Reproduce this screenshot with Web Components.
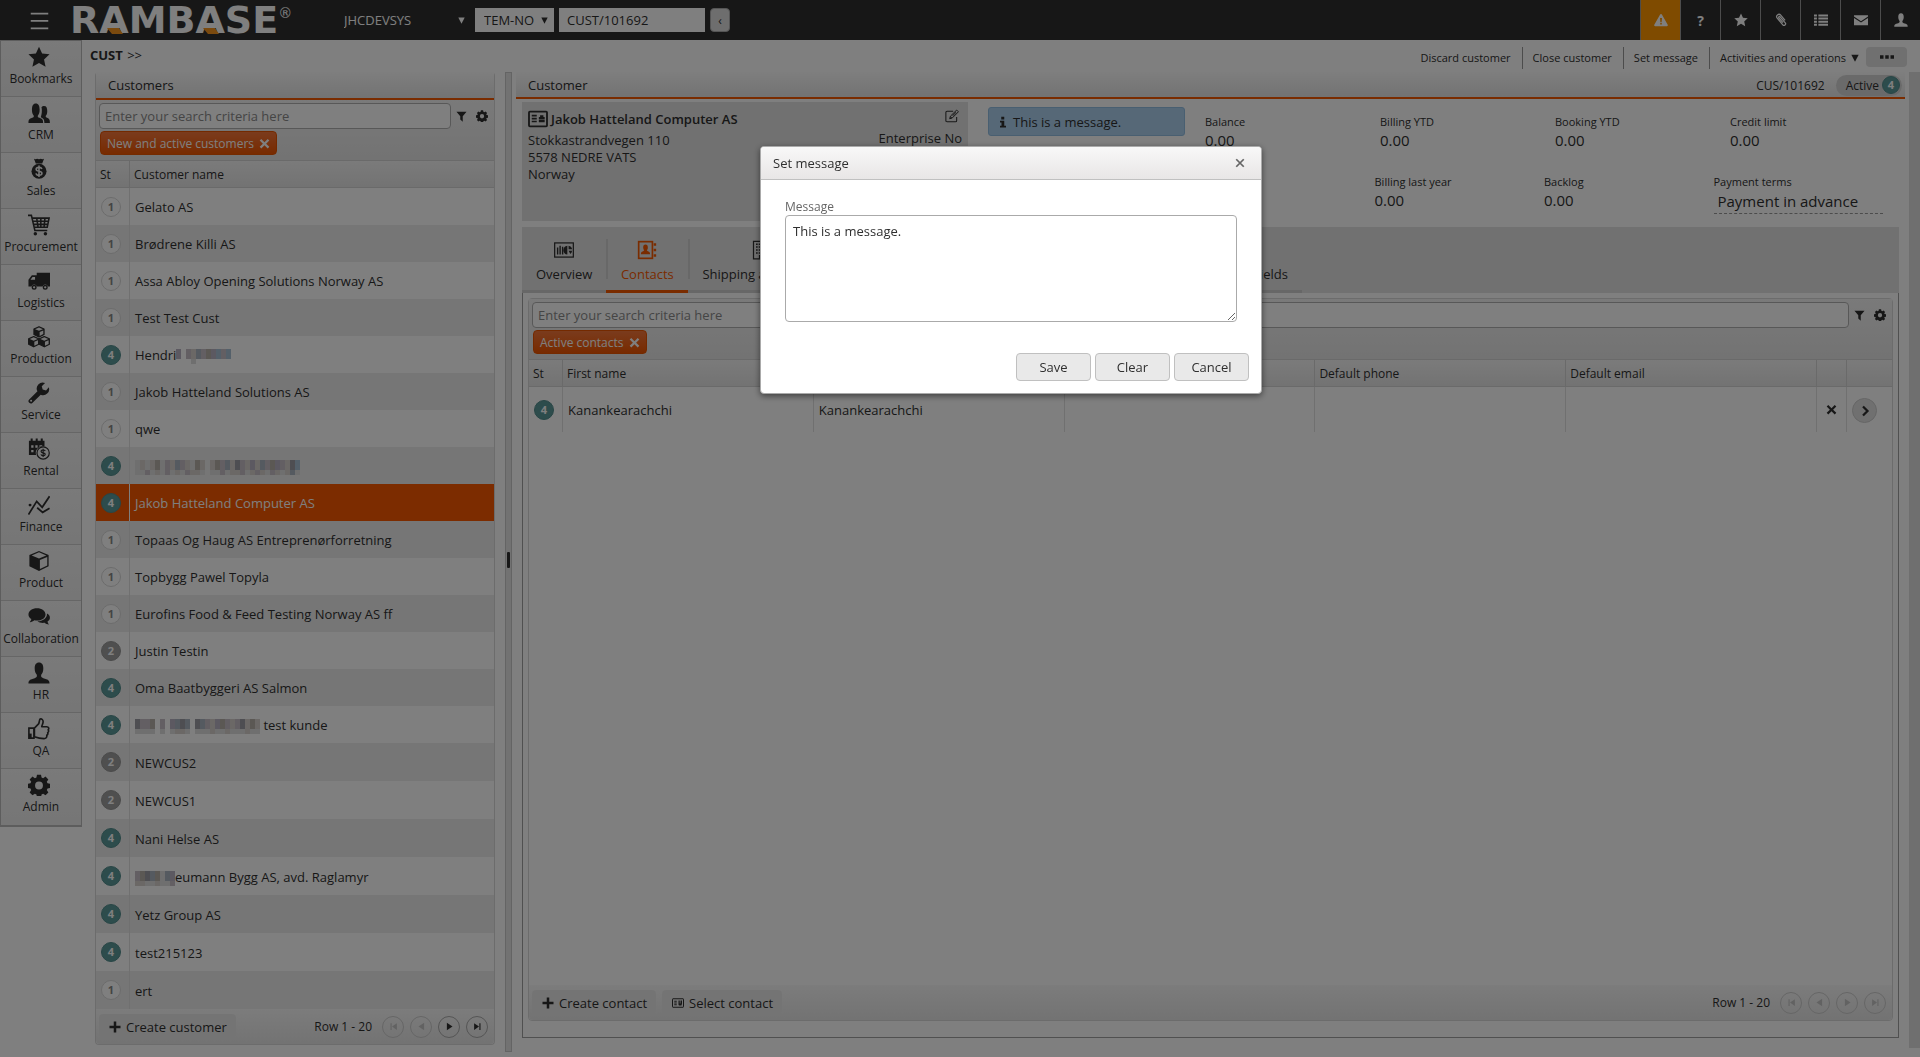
<!DOCTYPE html>
<html lang="en">
<head>
<meta charset="utf-8">
<title>RamBase - Customer</title>
<style>
html, body { margin: 0; padding: 0; }
body { background: #fff; color: #2f2f2f; font: 13px/17px "Open Sans", "Noto Sans", sans-serif; }
</style>
</head>
<body>
<rb-app></rb-app>
<script>
const BASE = `
*, *::before, *::after { box-sizing: border-box; }
:host { display: block; box-sizing: border-box; }
:host([hidden]) { display: none; }
button, input, textarea, select { font: inherit; color: inherit; margin: 0; border-radius: 0; }
button { border: 0; background: none; padding: 0; cursor: pointer; }
a { color: inherit; text-decoration: none; }
`;
function define(name, css, html) {
  customElements.define(name, class extends HTMLElement {
    constructor() {
      super();
      this.attachShadow({ mode: "open" });
    }
    connectedCallback() {
      if (this.shadowRoot.childNodes.length) return;
      const body = typeof html === "function" ? html(this) : html;
      this.shadowRoot.innerHTML = "<style>" + BASE + css + "</style>" + body;
    }
  });
}

/* ---------- icons ---------- */
const ICONS = {
  menu: '<path d="M2 4h20M2 12.500h20M2 21h20" fill="none" stroke="currentColor" stroke-width="2"/>',
  star: '<path d="M12 .8l3.400 7.400 8.100.9-6 5.500 1.700 8L12 18.500 4.800 22.600l1.700-8-6-5.500 8.100-.9z"/>',
  crm: '<path d="M.5 23c0-4 .8-4.500 4-5.700 1.700-.6 2-1.200 1.800-2.300C5 13.600 4.300 11.500 4.300 8.500c0-4.600 1.200-7 4.200-7s4.200 2.400 4.200 7c0 3-.7 5.100-2 6.500-.2 1.100.1 1.700 1.800 2.300 3.200 1.200 4 1.700 4 5.700z"/><path d="M14.700 5.800c.7-1 1.700-1.500 2.800-1.500 2.600 0 3.500 2 3.500 5.500 0 2.500-.5 4.200-1.600 5.300-.2 1 0 1.600 1.200 2.100 2.600 1 3.300 1.800 3.300 5.800h-6c0-4-1-5.300-4-6.500.7-1.800 1.200-4 1.200-7 0-1.400-.1-2.700-.4-3.700z"/>',
  sales: '<path d="M6.500.8c1 .6 2.500.6 3.500 0 1 .6 3 .6 4 0 1 .6 2.500.6 3.500 0L15.500 6h-7z"/><circle cx="12" cy="14.500" r="8.200"/><g fill="none" stroke="#f0f0f0" stroke-width="1.700"><path d="M15.200 12c-.5-1.300-1.600-1.800-3.200-1.800-1.900 0-3.100.7-3.100 2.100 0 3 6.300 1.300 6.300 4.300 0 1.500-1.300 2.200-3.200 2.200-1.800 0-3-.7-3.300-2.100M12 8.200v12.600"/></g>',
  cart: '<path d="M0 1.500h3.700L7.500 18H21M4.500 4.500H23L21 14.500H6.500M5.500 8h16.500M6 11.300h15.500M9.500 4.500l1.500 10M14 4.500v10M18.500 4.500l-1 10" fill="none" stroke="currentColor" stroke-width="1.700"/><circle cx="8" cy="21.500" r="1.900"/><circle cx="19" cy="21.500" r="1.900"/>',
  truck: '<path fill-rule="evenodd" d="M9.500 3H24v15h-2.300a3 3 0 0 0-5.800 0H9.600a3 3 0 0 0-5.800 0H.5v-7.500l3.700-4.700h5.300zM5 7.500l-2.300 3.200h5V7.500z"/><circle cx="6.700" cy="18.900" r="2" fill="none" stroke="currentColor" stroke-width="1.500"/><circle cx="18.800" cy="18.900" r="2" fill="none" stroke="currentColor" stroke-width="1.500"/>',
  boxes: '<g stroke="currentColor" stroke-width="1.300" stroke-linejoin="round"><path d="M12 .8l5.500 2.400v6L12 12 6.500 9.200v-6z"/><path d="M6.200 11.500l5.500 2.400v6l-5.500 2.800-5.500-2.800v-6z"/><path d="M17.800 11.500l5.500 2.400v6l-5.500 2.800-5.500-2.800v-6z"/></g><g fill="#f0f0f0"><path d="M12 1.600l4.300 1.900L12 5.300 7.700 3.500zM12.700 6.500l4-1.700v4l-4 2zM6.200 12.300l4.300 1.900-4.300 1.800-4.300-1.800zM6.900 17.200l4-1.700v4l-4 2zM17.800 12.300l4.300 1.900-4.300 1.800-4.300-1.800zM18.500 17.200l4-1.700v4l-4 2z"/></g>',
  wrench: '<path fill-rule="evenodd" d="M22.700 5.700a6.600 6.600 0 0 1-8.800 8.200L5 22.600a2.500 2.500 0 0 1-3.700-3.500l9-8.900A6.600 6.600 0 0 1 18.600 1L15 4.500l1 3.700 3.700 1zM3.400 19.400a1.100 1.100 0 1 0 0 2.200 1.100 1.100 0 0 0 0-2.200z"/>',
  rental: '<path fill-rule="evenodd" d="M1 3h17v6.200A7.500 7.500 0 0 0 8.800 18.500H1zM3.500 8v2.500H6V8zm4.500 0v2.500h2.500V8zm4.500 0v2h3V8zM3.500 13v2.500H6V13z"/><path d="M4 .5v3M9.500.5v3M15 .5v3" stroke="currentColor" stroke-width="2.200"/><circle cx="16.500" cy="16.300" r="6.700" fill="none" stroke="currentColor" stroke-width="1.300"/><path d="M18.800 14.300c-.4-.9-1.200-1.200-2.300-1.200-1.300 0-2.200.5-2.200 1.500 0 2.200 4.500 1 4.500 3.200 0 1-.9 1.600-2.300 1.600-1.300 0-2.100-.5-2.400-1.500M16.500 11.800v9" fill="none" stroke="currentColor" stroke-width="1.300"/>',
  finance: '<path d="M.5 22.500L9.500 8l6 6.500L23.500 2.500M1 12h2.500M10 15l6 5 7.500-4.500" fill="none" stroke="currentColor" stroke-width="1.900"/><circle cx="2.200" cy="12" r="1.500"/>',
  cube: '<path d="M12 1l10.500 4.500v12.300L12 23 1.500 17.800V5.500z"/><path d="M12 2.500L20 6l-8 3.300L4 6zM13 11l8-3.500v9.300L13 20.800z" fill="#f0f0f0"/>',
  chat: '<path d="M9.800 2.500c5.300 0 9.300 2.900 9.300 6.700s-4 6.700-9.300 6.700c-1 0-2-.1-2.900-.3-1.300 1-3 1.900-5 2 1-1 1.600-2 1.800-3.300C1.600 13 .5 11.300.5 9.200c0-3.800 4-6.700 9.300-6.700z"/><path d="M20.700 8.200c2 1 3.200 2.600 3.200 4.500 0 1.700-1 3.200-2.600 4.200.2 1.300.7 2.400 1.700 3.300-2 0-3.700-.8-4.800-1.800-3.100.5-6-.2-7.900-1.700 5.600 0 10.800-3.300 10.400-8.500z"/>',
  person: '<path d="M12 .5c3.300 0 4.700 2.400 4.700 6.500 0 3-.9 5.300-2.300 6.900-.4 2 .2 3 2.300 3.700 5.200 1.500 6.800 2 6.800 5.900H.5c0-3.900 1.600-4.400 6.800-5.900 2.100-.7 2.700-1.700 2.300-3.700C8.200 12.300 7.300 10 7.300 7 7.300 2.900 8.700.5 12 .5z"/>',
  thumb: '<path d="M7 11l4.500-4.500c1-1.500.7-4 1.700-5.300 1.800-.7 3.300.8 3.300 3S15 8 15 9.500h5.500c2 0 2.800 2 1.500 3.300.8 1.200.5 2.600-.5 3.200.4 1.200 0 2.300-1 2.900.3 2.300-1 3.600-3 3.600-4.500 0-6.500-.5-10.500-2z" fill="none" stroke="currentColor" stroke-width="1.800" stroke-linejoin="round"/><path d="M1 11h5.500v11H1z" fill="none" stroke="currentColor" stroke-width="1.800"/><path d="M1 17h3v5H1z"/>',
  gear: '<path fill-rule="evenodd" d="M9.800.7h4.400l.6 3 1.700.8 2.600-1.700 3.100 3.100-1.700 2.600.8 1.700 3 .6v4.400l-3 .6-.8 1.700 1.700 2.600-3.100 3.100-2.600-1.700-1.700.8-.6 3H9.800l-.6-3-1.700-.8-2.600 1.700-3.100-3.100 1.700-2.600-.8-1.700-3-.6v-4.400l3-.6.8-1.700-1.700-2.600 3.100-3.100 2.600 1.700 1.700-.8zM12 8.200a4.300 4.300 0 1 0 0 8.600 4.300 4.300 0 0 0 0-8.600z"/>',
  filter: '<path d="M1 1.500h22l-8.300 9.800v12l-5.400-4.500v-7.500z"/>',
  cross: '<path d="M5 2l7 7 7-7 3.500 3.500-7 6.800 7 7L19 22.800l-7-7-7 7-3.500-3.500 7-7-7-6.800z"/>',
  close: '<path d="M3 3l18 18M21 3L3 21" fill="none" stroke="currentColor" stroke-width="4.200"/>',
  plus: '<path d="M9.500 1h5v8.500H23v5h-8.500V23h-5v-8.500H1v-5h8.500z"/>',
  warn: '<path fill-rule="evenodd" d="M12 1.500c.7 0 1.100.3 1.500 1l10 17.700c.7 1.300 0 2.300-1.300 2.300H1.800C.5 22.500-.2 21.500.5 20.200l10-17.700c.4-.7.8-1 1.500-1zM10.300 8.500l.6 7h2.200l.6-7zm.4 8.300v2.700h2.600v-2.700z"/>',
  clip: '<path d="M19 12.500l-7.500-8.700a3.900 3.900 0 0 0-6 5l9.600 11.400a2.700 2.700 0 0 0 4.200-3.400L10.500 6.500a1.400 1.400 0 0 0-2.200 1.800l7 8.300" fill="none" stroke="currentColor" stroke-width="2.100"/>',
  list: '<path d="M7.500 2.500H24V6H7.500zm0 5.300H24v3.400H7.500zm0 5.300H24v3.400H7.500zm0 5.300H24v3.400H7.500zM0 2.500h5V6H0zm0 5.300h5v3.400H0zm0 5.300h5v3.400H0zm0 5.300h5v3.400H0z"/>',
  mail: '<path d="M0 4h24v2L12 14 0 6zM0 8.500l12 7.800 12-7.800V21H0z"/>',
  info: '<path d="M8.500 1.500h6V7h-6zM6 9.500h8.500v10H18V23H6v-3.500h3v-6.500H6z"/>',
  edit: '<path d="M20 13.500V20a2 2 0 0 1-2 2H3.500a2 2 0 0 1-2-2V6a2 2 0 0 1 2-2H14" fill="none" stroke="currentColor" stroke-width="1.800"/><path d="M20 1.800l3 3-10.500 10.500-4.500 1.400 1.400-4.500z" fill="none" stroke="currentColor" stroke-width="1.700"/><path d="M9 16.300l1-3.500 2.300 2.500zM12.500 11l6-6 1 1-6 6z"/>',
  card: '<rect x="1.200" y="3.200" width="21.600" height="17.600" rx="1" fill="none" stroke="currentColor" stroke-width="2.200"/><path d="M4.500 7h6v2h-6zm0 3.500h6v2h-6zm0 3.500h6v2h-6zM14.500 7.500h4v2H20v2.500h-7V9.500h1.500zM13 12.700h7V16h-7z"/>',
  pick: '<rect x="1" y="3.500" width="22" height="17" rx="1" fill="none" stroke="currentColor" stroke-width="2"/><path d="M4.500 7.500h5v2h-5zm0 3.500h5v2h-5zm0 3.500h5v2h-5zM13 7h2.500v6H17V7h3v6l-1 4h-5l-1-1.500z"/>',
  overview: '<rect x=".8" y="3.500" width="22.400" height="17" fill="none" stroke="currentColor" stroke-width="1.500"/><path d="M3.500 9h1.700v8.500H3.500zm3-2h1.700v10.500H6.500zm3 1h1.700v9.500H9.500zM16 7v10.500a5.300 5.300 0 0 1 0-10.500zM17.500 6.800a5 5 0 0 1 4.200 4.200h-4.200zM17.500 13h4.200a5 5 0 0 1-2 3.800z"/>',
  contacts: '<rect x="2" y="2" width="16.500" height="20" fill="none" stroke="currentColor" stroke-width="2"/><path d="M20 4h3v3h-3zm0 6.500h3v3h-3zM20 17h3v3h-3zM10.200 5.500c2 0 2.800 1.300 2.800 3.400 0 1.500-.5 2.700-1.200 3.500 0 1.300 3.900.9 3.900 4.600H4.700c0-3.700 3.900-3.300 3.900-4.600-.7-.8-1.200-2-1.200-3.500 0-2.100.8-3.400 2.800-3.400z"/>',
  building: '<path d="M3 1.500h18v21H3z" fill="none" stroke="currentColor" stroke-width="1.500"/><path d="M6 5h12M6 8.500h12M6 12h12M6 15.500h12" stroke="currentColor" stroke-width="1.800" stroke-dasharray="2 1.300"/><path d="M9.500 18h5v4.500h-5z"/>',
  chevron: '<path d="M8 3l9 9-9 9" fill="none" stroke="currentColor" stroke-width="4.500"/>',
  dots: '<path d="M0 9h6v6H0zm9 0h6v6H9zm9 0h6v6h-6z"/>',
  down: '<path d="M1 2h22L12 23z"/>',
  first: '<path d="M4 3h3v18H4zM21 3v18L8 12z"/>',
  prev: '<path d="M19 2v20L4 12z"/>',
  next: '<path d="M5 2v20l15-10z"/>',
  last: '<path d="M17 3h3v18h-3zM3 3v18l13-9z"/>'
};
define("rb-icon", `
:host { display: inline-block; flex: none; width: var(--size, 16px); height: var(--size, 16px); }
svg { display: block; width: 100%; height: 100%; fill: currentColor; }
`, el => `<svg viewBox="0 0 24 24" aria-hidden="true">${ICONS[el.getAttribute("name")]}</svg>`);

/* ---------- status circle ---------- */
define("rb-status", `
:host { display: inline-grid; place-items: center; flex: none; width: 20px; height: 20px; border-radius: 50%;
  font-size: 11px; line-height: 14px; font-weight: 700; color: #fff; background: #5a9898; border: 1px solid #528c8c; }
:host([value="1"]) { color: #888; background: #fff; border-color: #d8d8d8; }
:host([value="2"]) { background: #9e9e9e; border-color: #969696; }
`, el => `<span>${el.getAttribute("value")}</span>`);

/* ---------- pixelated name placeholder: one letter per block ---------- */
const TONES = { a: "#b8b2c2", b: "#c6bec6", c: "#d6d0cc", d: "#aab4c0", e: "#b6b0a8", f: "#dedede", g: "#9c9ca4", h: "#a8c0d4" };
define("rb-mosaic", `
:host { display: inline-block; height: 15px; vertical-align: -4px; }
svg { display: block; height: 15px; }
`, el => {
  const rows = [el.getAttribute("top"), el.getAttribute("bottom") || ""];
  const cell = (c, i, y, h) => TONES[c] ? `<rect x="${i * 5}" y="${y}" width="5" height="${h}" fill="${TONES[c]}"/>` : "";
  return `<svg width="${rows[0].length * 5}" height="15" shape-rendering="crispEdges" aria-hidden="true">` +
    [...rows[0]].map((c, i) => cell(c, i, 0, 10)).join("") +
    [...rows[1]].map((c, i) => cell(c, i, 10, 5)).join("") + "</svg>";
});

/* ---------- top bar ---------- */
define("rb-logo", `
:host { position: relative; height: 40px; color: #fff; white-space: nowrap; }
.word { font: 700 38px/40px "DejaVu Sans", sans-serif; }
sup { font: 14px/14px "DejaVu Sans", sans-serif; vertical-align: top; position: relative; top: 6px; }
svg { position: absolute; left: 0; top: 0; width: 220px; height: 40px; fill: #f7941d; }
`, `<span class="word">RAMBASE</span><sup>®</sup>
<svg viewBox="0 0 220 40" aria-hidden="true"><path d="M37 28h12l4 6H42zM133 28h12l4 6h-11z"/></svg>`);

define("rb-topbar", `
:host { display: flex; align-items: center; height: 40px; background: #2f2f2f; color: #fff; }
.menu { margin-left: 29px; width: 21px; height: 21px; --size: 21px; }
rb-logo { margin-left: 20px; width: 266px; }
.select { position: relative; display: flex; align-items: center; }
.select rb-icon { position: absolute; right: 6px; --size: 7px; pointer-events: none; }
select { appearance: none; border: 0; background: transparent; height: 24px; width: 100%; padding: 0 8px; outline: 0; }
.system { width: 135px; margin-right: 4px; }
.company { width: 79px; background: #fff; color: #2f2f2f; }
.company select { padding: 0 0 0 9px; }
.path { width: 146px; height: 24px; border: 0; background: #fff; color: #2f2f2f; padding: 0 8px; margin: 0 5px; }
.back { width: 20px; height: 24px; border-radius: 4px; background: #ddd; color: #2f2f2f; border: 1px solid #aaa; font-size: 12px; }
nav { margin-left: auto; display: flex; height: 40px; }
nav button { width: 40px; border-left: 1px solid #999; display: grid; place-items: center; --size: 14px; }
nav button.alert { background: #ff9600; }
nav span { font-weight: 700; font-size: 14px; }
`, `
<button class="menu" aria-label="Menu"><rb-icon name="menu"></rb-icon></button>
<rb-logo></rb-logo>
<div class="select system"><select aria-label="System"><option>JHCDEVSYS</option></select><rb-icon name="down"></rb-icon></div>
<div class="select company"><select aria-label="Company"><option>TEM-NO</option></select><rb-icon name="down"></rb-icon></div>
<input class="path" aria-label="Program" value="CUST/101692">
<button class="back" aria-label="Back">‹</button>
<nav>
<button class="alert" aria-label="Alerts"><rb-icon name="warn"></rb-icon></button>
<button aria-label="Help"><span>?</span></button>
<button aria-label="Favourites"><rb-icon name="star"></rb-icon></button>
<button aria-label="Attachments"><rb-icon name="clip"></rb-icon></button>
<button aria-label="Tasks"><rb-icon name="list"></rb-icon></button>
<button aria-label="Messages"><rb-icon name="mail"></rb-icon></button>
<button aria-label="User"><rb-icon name="person"></rb-icon></button>
</nav>`);

/* ---------- module menu ---------- */
const MODULES = [["star","Bookmarks"],["crm","CRM"],["sales","Sales"],["cart","Procurement"],["truck","Logistics"],["boxes","Production"],["wrench","Service"],["rental","Rental"],["finance","Finance"],["cube","Product"],["chat","Collaboration"],["person","HR"],["thumb","QA"],["gear","Admin"]];
define("rb-sidebar", `
:host { width: 82px; border: 1px solid #bbb; border-bottom-width: 2px; background: #f0f0f0; align-self: flex-start; }
a { display: flex; flex-direction: column; align-items: center; height: 56px; padding-top: 5px; gap: 3px; font-size: 12px; line-height: 16px; font-weight: 500; background: linear-gradient(#f4f4f4, #ececec); border-bottom: 1px solid #ccc; --size: 22px; }
a:last-child { border-bottom: 0; }
rb-icon { margin-right: 4px; }
`, MODULES.map(m => `<a href="#"><rb-icon name="${m[0]}"></rb-icon><span>${m[1]}</span></a>`).join(""));

/* ---------- action bar ---------- */
define("rb-actions", `
:host { display: flex; align-items: center; height: 32px; padding: 0 13px 0 8px; }
.crumb { font-size: 13px; margin-right: auto; padding-bottom: 1px; }
.crumb b { font-weight: 700; margin-right: 1px; }
a { font-size: 11px; line-height: 22px; padding: 0 11px 0 10px; border-right: 1px solid #999; margin-top: 4px; }
a.last { border: 0; padding-right: 7px; display: flex; align-items: center; gap: 5px; --size: 8px; }
button { width: 41px; height: 20px; background: #e0e0e0; border-radius: 4px; display: grid; place-items: center; --size: 14px; margin-top: 2px; }
`, `<div class="crumb"><b>CUST</b> &gt;&gt;</div>
<a href="#">Discard customer</a><a href="#">Close customer</a><a href="#">Set message</a>
<a href="#" class="last">Activities and operations <rb-icon name="down"></rb-icon></a>
<button aria-label="More"><rb-icon name="dots"></rb-icon></button>`);

/* ---------- panel title ---------- */
define("rb-title", `
:host { display: flex; align-items: center; height: 28px; padding: 1px 3px 0 12px; font-weight: 500; background: linear-gradient(#fdfdfd, #e6e6e6); border-bottom: 2px solid #f45800; }
.end { margin-left: auto; display: flex; align-items: center; gap: 11px; font-size: 12px; }
`, `<slot></slot><div class="end"><slot name="end"></slot></div>`);

/* ---------- search row with filter chip ---------- */
define("rb-search", `
:host { padding: 3px 6px 5px 3px; background: linear-gradient(#f4f4f4, #e6e6e6); }
.row { display: flex; align-items: center; }
input { flex: 1; min-width: 0; height: 26px; border: 1px solid #b0b0b0; border-radius: 4px; background: #fff; padding: 0 5px; outline: 0; }
input::placeholder { color: #8a8a8a; opacity: 1; }
.row button { --size: 11px; width: 11px; height: 22px; margin-left: 5px; display: grid; place-items: center; }
.row button + button { --size: 12px; width: 12px; margin-left: 9px; }
.chip { margin: 2px 0 0 1px; height: 24px; padding: 0 6px; border: 1px solid #e85400; border-radius: 4px; background: linear-gradient(#f5773a, #f05500); color: #fff; font-size: 12px; font-weight: 500; display: inline-flex; align-items: center; gap: 5px; --size: 11px; }
`, el => `<div class="row"><input aria-label="Search" placeholder="Enter your search criteria here">
<button aria-label="Filter"><rb-icon name="filter"></rb-icon></button><button aria-label="Settings"><rb-icon name="gear"></rb-icon></button></div>
<button class="chip"><span>${el.getAttribute("chip")}</span><rb-icon name="cross"></rb-icon></button>`);

/* ---------- grid footer ---------- */
define("rb-footer", `
:host { display: flex; align-items: center; height: 35px; padding: 0 6px 0 3px; background: linear-gradient(#f8f8f8, #e6e6e6); border-radius: 0 0 4px 4px; }
.pages { margin-left: auto; display: flex; align-items: center; gap: 6px; }
.pages span { margin-right: 4px; font-size: 12px; }
.pages button { width: 22px; height: 22px; border: 1px solid #aaa; border-radius: 50%; display: grid; place-items: center; --size: 9px; color: #2f2f2f; }
.pages button[disabled] { color: #c4c4c4; border-color: #ccc; }
.actions { display: flex; gap: 6px; }
`, el => {
  const off = (el.getAttribute("off") || "").split(" ");
  return `<div class="actions"><slot></slot></div><div class="pages"><span>Row 1 - 20</span>` +
    ["first", "prev", "next", "last"].map(n => `<button aria-label="${n} page"${off.includes(n) ? " disabled" : ""}><rb-icon name="${n}"></rb-icon></button>`).join("") + "</div>";
});
define("rb-action", `
:host { display: block; }
button { height: 25px; padding: 1px 9px 0 10px; border-radius: 4px; background: #e9e9e9; display: flex; align-items: center; gap: 5px; --size: 12px; }
`, el => `<button><rb-icon name="${el.getAttribute("icon")}"></rb-icon><span><slot></slot></span></button>`);

/* ---------- tables ---------- */
const TABLE = `
table { width: 100%; table-layout: fixed; border-collapse: separate; border-spacing: 0; }
th { height: 28px; padding: 1px 5px 0 4px; text-align: left; font-weight: 400; font-size: 12px; background: linear-gradient(#f6f6f6, #e6e6e6); border: solid #d4d4d4; border-width: 1px 1px 1px 0; }
td { padding: 2px 5px 0; border-right: 1px solid #e0e0e0; }
th:last-child, td:last-child { border-right: 0; }
td:first-child { padding: 0 0 0 5px; line-height: 0; }
`;
const CUSTOMERS = [[1,"Gelato AS"],[1,"Brødrene Killi AS"],[1,"Assa Abloy Opening Solutions Norway AS"],[1,"Test Test Cust"],
  [4,'Hendri<rb-mosaic top="a.bcdbeahbh" bottom="...f......."></rb-mosaic>'],
  [1,"Jakob Hatteland Solutions AS"],[1,"qwe"],
  [4,'<rb-mosaic top="fcfcefbcdbcfec.cebdcgbcacdbeabcgh" bottom="ffbfcfbfcfbccf.ffbfccbfcbcfbcfcdf"></rb-mosaic>'],
  [4,"Jakob Hatteland Computer AS"],[1,"Topaas Og Haug AS Entreprenørforretning"],[1,"Topbygg Pawel Topyla"],[1,"Eurofins Food &amp; Feed Testing Norway AS ff"],
  [2,"Justin Testin"],[4,"Oma Baatbyggeri AS Salmon"],
  [4,'<rb-mosaic top="gbbe.b.adgd.gdbcaebcbgcec" bottom="ffff.f.fccf.fffcffcfffcff"></rb-mosaic> test kunde'],
  [2,"NEWCUS2"],[2,"NEWCUS1"],[4,"Nani Helse AS"],[4,'<rb-mosaic top="begdefda" bottom="ccffcffb"></rb-mosaic>eumann Bygg AS, avd. Raglamyr'],
  [4,"Yetz Group AS"],[4,"test215123"],[1,"ert"]];
define("rb-customers", `
:host { width: 400px; align-self: flex-start; border: 1px solid #d8d8d8; border-top: 0; border-radius: 4px; }
${TABLE}
th:first-child { width: 34px; }
tbody tr { height: 37px; }
tbody tr:nth-child(n+16) { height: 38px; }
tbody tr:nth-child(even) td { background: #ededed; }
tbody tr:nth-child(9) td { background: #f85800; color: #fff; font-weight: 500; border-color: #fff; }
`, `<rb-title>Customers</rb-title><rb-search chip="New and active customers"></rb-search>
<table><thead><tr><th>St</th><th>Customer name</th></tr></thead><tbody>` +
  CUSTOMERS.map(c => `<tr><td><rb-status value="${c[0]}"></rb-status></td><td>${c[1]}</td></tr>`).join("") +
`</tbody></table><rb-footer off="first prev"><rb-action icon="plus">Create customer</rb-action></rb-footer>`);

define("rb-contacts", `
:host { display: flex; flex-direction: column; flex: 1; border: 1px solid #d8d8d8; border-radius: 4px; }
${TABLE}
tbody tr { height: 45px; }
.st { width: 34px; } .del { width: 30px; } .go { width: 45px; }
.mid { text-align: center; }
td button { display: inline-grid; place-items: center; --size: 11px; }
td .open { width: 25px; height: 25px; border-radius: 50%; background: #e0e0e0; border: 1px solid #ccc; --size: 12px; }
td { vertical-align: middle; }
.fill { flex: 1; }
`, `<rb-search chip="Active contacts"></rb-search>
<table><thead><tr><th class="st">St</th><th>First name</th><th>Last name</th><th>Job title</th><th>Default phone</th><th>Default email</th><th class="del"></th><th class="go"></th></tr></thead>
<tbody><tr><td><rb-status value="4"></rb-status></td><td>Kanankearachchi</td><td>Kanankearachchi</td><td></td><td></td><td></td>
<td class="mid"><button aria-label="Remove"><rb-icon name="cross"></rb-icon></button></td><td><button class="open" aria-label="Open"><rb-icon name="chevron"></rb-icon></button></td></tr></tbody></table>
<div class="fill"></div>
<rb-footer off="first prev next last"><rb-action icon="plus">Create contact</rb-action><rb-action icon="pick">Select contact</rb-action></rb-footer>`);

/* ---------- customer header ---------- */
define("rb-metric", `
:host { font-size: 15px; line-height: 20px; }
small { display: block; font-size: 11px; line-height: 16px; }
`, el => `<small>${el.getAttribute("label")}</small><slot></slot>`);

define("rb-summary", `
:host { display: flex; height: 119px; margin: 3px 0 0 6px; }
.card { width: 446px; background: #e3e3e3; padding: 7px 6px 0 6px; display: flex; justify-content: space-between; }
h2 { margin: 0 0 3px; font-size: 13px; line-height: 18px; font-weight: 600; display: flex; align-items: center; gap: 3px; --size: 20px; }
.side { display: flex; flex-direction: column; align-items: flex-end; gap: 7px; --size: 14px; }
.side rb-icon { margin-right: 3px; }
.note { width: 197px; height: 29px; margin: 5px 0 0 20px; border: 1px solid #93bfe3; border-radius: 3px; background: #acd0ee; padding: 1px 8px 0; display: flex; align-items: center; gap: 4px; --size: 12px; }
.metrics { flex: 1; margin: 12px 0 0 20px; display: flex; flex-direction: column; gap: 24px; }
.row { display: grid; grid-template-columns: repeat(4, 1fr); }
.row.two { padding-right: 22px; }
select { appearance: none; display: block; border: 0; border-bottom: 1px dashed #999; width: 100%; max-width: 171px; height: 24px; background: none; padding: 0 4px 2px; outline: 0; }
address { font-style: normal; }
`, `
<section class="card"><div><h2><rb-icon name="card"></rb-icon>Jakob Hatteland Computer AS</h2>
<address>Stokkastrandvegen 110<br>5578 NEDRE VATS<br>Norway</address></div>
<div class="side"><rb-icon name="edit"></rb-icon><span>Enterprise No</span></div></section>
<div class="note"><rb-icon name="info"></rb-icon>This is a message.</div>
<div class="metrics"><div class="row"><rb-metric label="Balance">0.00</rb-metric><rb-metric label="Billing YTD">0.00</rb-metric><rb-metric label="Booking YTD">0.00</rb-metric><rb-metric label="Credit limit">0.00</rb-metric></div>
<div class="row two"><span></span><rb-metric label="Billing last year">0.00</rb-metric><rb-metric label="Backlog">0.00</rb-metric><rb-metric label="Payment terms"><select aria-label="Payment terms"><option>Payment in advance</option></select></rb-metric></div></div>`);

define("rb-tabs", `
:host { background: #e3e3e3; height: 66px; margin: 6px 6px 0; }
nav { display: flex; width: 780px; max-width: 100%; height: 66px; }
button { position: relative; min-width: 84px; padding: 13px 14px 0; display: flex; flex-direction: column; align-items: center; gap: 6px; font-weight: 500; border-bottom: 3px solid #cfcfcf; --size: 20px; white-space: nowrap; }
button + button::before { content: ""; position: absolute; left: 0; top: 12px; width: 2px; height: 40px; background: #d0d0d0; }
button.on { color: #f45800; border-color: #f45800; min-width: 82px; }
.gap { flex: 1; border-bottom: 3px solid #cfcfcf; }
`, `<nav><button><rb-icon name="overview"></rb-icon>Overview</button><button class="on"><rb-icon name="contacts"></rb-icon>Contacts</button><button><rb-icon name="building"></rb-icon>Shipping addresses</button><span class="gap"></span><button><rb-icon name="card"></rb-icon>Custom fields</button></nav>`);

define("rb-customer", `
:host { flex: 1; min-width: 0; display: flex; flex-direction: column; margin-bottom: 14px; }
rb-title { height: 27px; }
.pill { display: flex; align-items: center; gap: 3px; height: 21px; padding: 0 2px 0 10px; border-radius: 11px; background: #d4d4d4; }
.pill rb-status { width: 18px; height: 18px; }
.frame { flex: 1; display: flex; margin: 0 6px; padding: 5px 5px 16px; border: 1px solid #a0a0a0; border-top: 0; }
`, `<rb-title>Customer<span slot="end">CUS/101692</span><span slot="end" class="pill">Active <rb-status value="4"></rb-status></span></rb-title>
<rb-summary></rb-summary><rb-tabs></rb-tabs><div class="frame"><rb-contacts></rb-contacts></div>`);

/* ---------- dialog ---------- */
define("rb-dialog", `
:host { position: fixed; inset: 0; background: rgba(0, 0, 0, .5); }
.box { position: absolute; left: calc(50% - 200px); top: 146px; width: 502px; background: #fff; border: 1px solid #aaa; border-radius: 4px; box-shadow: 0 2px 6px rgba(0, 0, 0, .5); }
header { display: flex; align-items: center; justify-content: space-between; height: 33px; padding: 0 16px 0 12px; border-bottom: 1px solid #c0c0c0; border-radius: 3px 3px 0 0; background: linear-gradient(#f8f8f8, #e8e6e6); }
header button { --size: 10px; color: #666; display: grid; }
.body { padding: 19px 24px 0; }
label { display: block; font-size: 12px; line-height: 16px; color: #666; }
textarea { display: block; width: 100%; height: 107px; border: 1px solid #aaa; border-radius: 4px; padding: 7px; font-weight: 500; outline: 0; background: #fff; }
footer { display: flex; justify-content: flex-end; gap: 4px; padding: 31px 12px 12px; }
footer button { width: 75px; height: 28px; background: #e9e9e9; border: 1px solid #c0c0c0; border-radius: 4px; }
`, `<div class="box" role="dialog" aria-label="Set message"><header><span>Set message</span><button aria-label="Close"><rb-icon name="close"></rb-icon></button></header>
<div class="body"><label for="message">Message</label><textarea id="message">This is a message.</textarea></div>
<footer><button>Save</button><button>Clear</button><button>Cancel</button></footer></div>`);

/* ---------- application ---------- */
define("rb-app", `
:host { display: flex; flex-direction: column; min-height: 100vh; }
.body { flex: 1; display: flex; }
main { flex: 1; min-width: 0; display: flex; flex-direction: column; }
.panes { flex: 1; display: flex; padding: 0 0 5px 13px; }
.split { width: 7px; margin: 0 4px 0 10px; background: #e4e4e4; border: 1px solid #c8c8c8; display: grid; place-items: center; }
.split i { width: 3px; height: 16px; background: #2f2f2f; border-radius: 1px; margin-bottom: 4px; }
.scroll { width: 11px; margin: 0 0 4px 4px; background: #dedede; }
`, `<rb-topbar></rb-topbar><div class="body"><rb-sidebar></rb-sidebar><main><rb-actions></rb-actions>
<div class="panes"><rb-customers></rb-customers><div class="split"><i></i></div><rb-customer></rb-customer><div class="scroll"></div></div></main></div>
<rb-dialog></rb-dialog>`);
</script>
</body>
</html>
